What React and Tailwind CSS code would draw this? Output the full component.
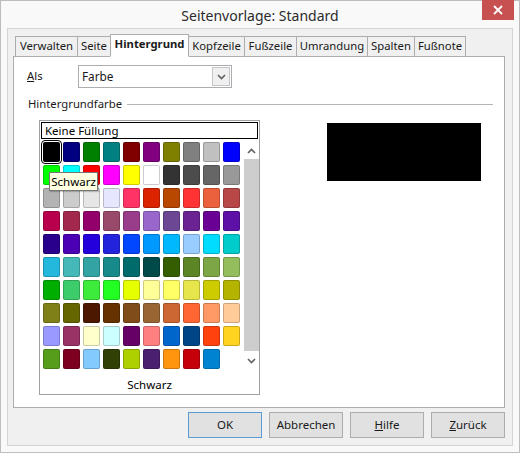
import React from "react";

const rows = [
  ["#000000","#000080","#008000","#008080","#800000","#800080","#808000","#808080","#c0c0c0","#0000ff"],
  ["#00ff00","#00ffff","#ff0000","#ff00ff","#ffff00","#ffffff","#333333","#4c4c4c","#666666","#999999"],
  ["#b3b3b3","#cccccc","#e6e6e6","#e6e6ff","#ff3366","#dc2300","#b84700","#ff3333","#eb613d","#b84747"],
  ["#b8004c","#a3284e","#94006b","#994a6b","#993d8a","#9966cc","#6b4794","#6b2394","#6b0094","#5e11a6"],
  ["#28008b","#4b00b5","#2300dc","#2323dc","#0047ff","#0099ff","#00b8ff","#99ccff","#00dcff","#00cccc"],
  ["#23b8dc","#47b8b8","#33a3a3","#198a8a","#006b6b","#004a4a","#355e00","#5c8526","#7da647","#94bd5e"],
  ["#00ae00","#3dcc6b","#3deb3d","#23ff23","#e6ff00","#ffff99","#ffff66","#e6e64c","#cccc00","#b3b300"],
  ["#808019","#666600","#4c1900","#663300","#804c19","#996633","#cc6633","#ff6633","#ff9966","#ffcc99"],
  ["#9999ff","#993366","#ffffcc","#ccffff","#660066","#ff8080","#0066cc","#004586","#ff420e","#ffd320"],
  ["#579d1c","#7e0021","#83caff","#314004","#aecf00","#4b1f6f","#ff950e","#c5000b","#0084d1"],
];

const tabs = [
  ["Verwalten", "w-[63px]"],
  ["Seite", "w-[34px]"],
  ["Hintergrund", "w-[79px]"],
  ["Kopfzeile", "w-[57px]"],
  ["Fußzeile", "w-[53px]"],
  ["Umrandung", "w-[72px]"],
  ["Spalten", "w-[48px]"],
  ["Fußnote", "w-[52px]"],
];

function Chevron({ up }) {
  return (
    <svg width="9" height="6" viewBox="0 0 9 6">
      <path
        d={up ? "M1 5 L4.5 1.5 L8 5" : "M1 1 L4.5 4.5 L8 1"}
        fill="none"
        stroke="#606060"
        strokeWidth="1.6"
      />
    </svg>
  );
}

function Btn({ children, def }) {
  return (
    <div
      className={
        "w-[74px] h-[26px] flex items-center justify-center text-[11.5px] text-[#1a1a1a] bg-[#e1e1e1] border " +
        (def ? "border-[#5b9bd5]" : "border-[#adadad]")
      }
    >
      {children}
    </div>
  );
}

export default function App() {
  return (
    <div
      className="w-[521px] h-[455px] bg-white overflow-hidden"
      style={{ fontFamily: '"Noto Sans", "Open Sans", sans-serif' }}
    >
      <div className="w-[520px] h-[453px] border border-[#bdbdbd] bg-[#f9f9f9] flex flex-col">
        {/* title bar */}
        <div className="relative h-[27px] flex items-center justify-center">
          <span className="text-[14px] text-[#2b2b2b] pt-[2px]">Seitenvorlage: Standard</span>
          <div className="absolute right-[5px] top-[-1px] w-[32px] h-[20px] bg-[#c75050] flex items-center justify-center">
            <svg width="10" height="10" viewBox="0 0 10 10">
              <path d="M1 1 L9 9 M9 1 L1 9" stroke="white" strokeWidth="1.8" />
            </svg>
          </div>
        </div>
        {/* client */}
        <div className="mx-[6px] mb-[6px] flex-1 border border-[#d4d4d4] bg-[#f0f0f0] flex flex-col pl-[5px] pr-[7px] pt-[5px] text-[11.3px] text-[#1a1a1a]">
          {/* tabs */}
          <div className="flex items-end h-[22px] pl-[2px] relative z-10">
            {tabs.map(([t, w], i) => {
              const sel = t === "Hintergrund";
              return (
                <div
                  key={t}
                  className={
                    w +
                    " flex items-center justify-center border border-[#adadad] " +
                    (i > 0 ? "-ml-px " : "") +
                    (sel
                      ? "h-[23px] bg-white border-b-white font-bold -mb-px z-10 relative"
                      : "h-[20px] bg-[#f0f0f0] border-b-0")
                  }
                >
                  <span className={sel ? "-mt-[2px]" : ""}>{t}</span>
                </div>
              );
            })}
          </div>
          {/* panel */}
          <div className="h-[352px] border border-[#adadad] bg-white px-[13px] pt-[8px] flex flex-col">
            <div className="flex items-center h-[23px]">
              <span className="w-[51px]">
                <span className="underline">A</span>ls
              </span>
              <div className="w-[154px] h-[23px] border border-[#abadb3] bg-white flex items-center pl-[3px] pr-[1px]">
                <span className="flex-1 text-[11.8px]">Farbe</span>
                <div className="w-[18px] h-[19px] border border-[#c5c5c5] bg-[#f0f0f0] flex items-center justify-center">
                  <Chevron />
                </div>
              </div>
            </div>
            <div className="mt-[8px] h-[16px] flex items-center">
              <span className="ml-[1px]">Hintergrundfarbe</span>
              <div className="flex-1 h-px bg-[#b4b4b4] ml-[5px] mr-[-2px]"></div>
            </div>
            <div className="mt-[8px] flex items-start">
              {/* popup */}
              <div className="relative ml-[12px] w-[221px] h-[275px] border border-[#a0a0a0] bg-white p-px flex flex-col">
                <div className="h-[17px] border border-black flex items-center pl-[3px] text-[11.5px] text-black">
                  Keine Füllung
                </div>
                <div className="mt-[3px] flex pl-[2px]">
                  <div className="flex flex-col gap-[3px]">
                    {rows.map((r, ri) => (
                      <div key={ri} className="flex gap-[3px]">
                        {r.map((c, ci) => (
                          <div
                            key={ci}
                            className={
                              "w-[17px] h-[20px] rounded-[2px] border border-black/20 " +
                              (ri === 0 && ci === 0 ? "outline outline-1 outline-black outline-offset-1" : "")
                            }
                            style={{ backgroundColor: c }}
                          />
                        ))}
                      </div>
                    ))}
                  </div>
                  <div className="ml-[4px] w-[15px] h-[228px] bg-white flex flex-col items-center">
                    <div className="h-[17px] flex items-center justify-center">
                      <Chevron up />
                    </div>
                    <div className="w-[15px] h-[192px] bg-[#cdcdcd]"></div>
                    <div className="flex-1 flex items-center justify-center">
                      <Chevron />
                    </div>
                  </div>
                </div>
                <div className="mt-[6px] mx-[1px] h-px bg-[#a0a0a0]"></div>
                <div className="flex-1 flex items-center justify-center text-[11.5px] text-black pb-[1px]">
                  Schwarz
                </div>
                {/* tooltip */}
                <div className="absolute left-[9px] top-[51px] w-[49px] h-[19px] bg-[#ffffe1] border border-[#767676] flex items-center justify-center text-[11.5px] text-black shadow-[1px_1px_1px_rgba(0,0,0,0.2)]">
                  Schwarz
                </div>
              </div>
              <div className="ml-[67px] mt-[3px] w-[154px] h-[58px] bg-black"></div>
            </div>
          </div>
          {/* buttons */}
          <div className="mt-[4px] flex justify-end gap-[7px]">
            <Btn def>OK</Btn>
            <Btn>Abbrechen</Btn>
            <Btn>
              <span>
                <span className="underline">H</span>ilfe
              </span>
            </Btn>
            <Btn>
              <span>
                <span className="underline">Z</span>urück
              </span>
            </Btn>
          </div>
        </div>
      </div>
    </div>
  );
}
